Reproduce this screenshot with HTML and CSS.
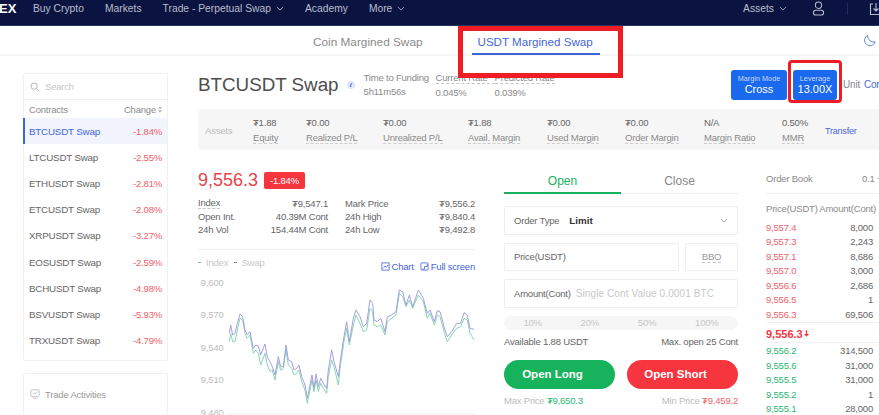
FILE: index.html
```html
<!DOCTYPE html>
<html lang="en">
<head>
  <meta charset="UTF-8">
  <title>USDT Margined Swap</title>
  <link rel="stylesheet" href="styles.css">
</head>
<body>
  <!-- Top bar -->
  <header class="topbar">
    <span class="logo">EX</span>
    <nav class="nav">
      <a>Buy Crypto</a>
      <a>Markets</a>
      <a>Trade - Perpetual Swap <svg class="chev" viewBox="0 0 10 6"><path d="M1 1l4 4 4-4"/></svg></a>
      <a>Academy</a>
      <a>More <svg class="chev" viewBox="0 0 10 6"><path d="M1 1l4 4 4-4"/></svg></a>
    </nav>
    <div class="top-right">
      <a>Assets <svg class="chev" viewBox="0 0 10 6"><path d="M1 1l4 4 4-4"/></svg></a>
      <svg class="user-icon" viewBox="0 0 14 16"><circle cx="7" cy="4.5" r="3.4"/><rect x="1.5" y="10" width="11" height="5" rx="2.5"/></svg>
      <span class="top-sep"></span>
      <svg class="dl-icon" viewBox="0 0 14 14"><path d="M4 2H1.500v10.500h11V2H10M7 1v8M4.500 6.500L7 9l2.500-2.500"/></svg>
    </div>
  </header>

  <!-- Swap type tabs -->
  <div class="subnav">
    <a class="sub-coin">Coin Margined Swap</a>
    <a class="sub-usdt">USDT Margined Swap</a>
    <svg class="moon" viewBox="0 0 14 14"><path d="M5 1.500a5.800 5.800 0 1 0 8 7A6.500 6.500 0 0 1 5 1.500z"/></svg>
  </div>

  <div class="page">
    <!-- Contract list -->
    <aside class="side">
      <div class="card">
        <div class="search">
          <svg viewBox="0 0 12 12"><circle cx="5" cy="5" r="3.800"/><path d="M8 8l3 3"/></svg>
          <span>Search</span>
        </div>
        <div class="list-head">
          <span>Contracts</span>
          <span class="sort">Change <svg viewBox="0 0 5 8"><path d="M2.500 0L5 3H0zM2.500 8L0 5h5z"/></svg></span>
        </div>
        <div class="row active"><span>BTCUSDT Swap</span><b>-1.84%</b></div>
        <div class="row"><span>LTCUSDT Swap</span><b>-2.55%</b></div>
        <div class="row"><span>ETHUSDT Swap</span><b>-2.81%</b></div>
        <div class="row"><span>ETCUSDT Swap</span><b>-2.08%</b></div>
        <div class="row"><span>XRPUSDT Swap</span><b>-3.27%</b></div>
        <div class="row"><span>EOSUSDT Swap</span><b>-2.59%</b></div>
        <div class="row"><span>BCHUSDT Swap</span><b>-4.98%</b></div>
        <div class="row"><span>BSVUSDT Swap</span><b>-5.93%</b></div>
        <div class="row"><span>TRXUSDT Swap</span><b>-4.79%</b></div>
      </div>
      <div class="card activities">
        <svg viewBox="0 0 12 12"><rect x="1" y="1" width="10" height="8" rx="1.500"/><path d="M3 6.500l2-2 1.500 1L9 3.500M3 11h6"/></svg>
        <span>Trade Activities</span>
      </div>
    </aside>

    <main class="main">
      <div class="head">
        <h1>BTCUSDT Swap</h1>
        <span class="info">i</span>
        <div class="fund fund-time"><span>Time to Funding</span><span>5h11m56s</span></div>
        <div class="fund fund-cur"><span class="dash">Current Rate</span><span>0.045%</span></div>
        <div class="fund"><span class="dash">Predicted Rate</span><span>0.039%</span></div>
        <div class="head-right">
          <button class="mode"><small>Margin Mode</small>Cross</button>
          <button class="mode lev"><small>Leverage</small>13.00X</button>
          <span class="unit">Unit</span>
          <a class="unit-link">Cont</a>
        </div>
      </div>

      <div class="assets">
        <span class="assets-title">Assets</span>
        <div><span>₮1.88</span><em>Equity</em></div>
        <div><span>₮0.00</span><em>Realized P/L</em></div>
        <div><span>₮0.00</span><em>Unrealized P/L</em></div>
        <div><span>₮1.88</span><em>Avail. Margin</em></div>
        <div><span>₮0.00</span><em>Used Margin</em></div>
        <div><span>₮0.00</span><em>Order Margin</em></div>
        <div><span>N/A</span><em>Margin Ratio</em></div>
        <div><span>0.50%</span><em>MMR</em></div>
        <a class="transfer">Transfer</a>
      </div>

      <div class="columns">
        <!-- Price and chart -->
        <section class="market">
          <div class="price-line">
            <span class="price">9,556.3</span>
            <span class="badge">-1.84%</span>
          </div>
          <div class="stats">
            <div><span class="dash">Index</span><span>₮9,547.1</span></div>
            <div><span>Mark Price</span><span>₮9,556.2</span></div>
            <div><span>Open Int.</span><span>40.39M Cont</span></div>
            <div><span>24h High</span><span>₮9,840.4</span></div>
            <div><span>24h Vol</span><span>154.44M Cont</span></div>
            <div><span>24h Low</span><span>₮9,492.8</span></div>
          </div>
          <div class="chart-bar">
            <div class="legend"><i class="g"></i>Index <i class="p"></i>Swap</div>
            <div class="chart-links">
              <a><svg viewBox="0 0 10 10"><rect x="1" y="1" width="8" height="8"/><path d="M2.500 7l2-2.500 1.500 1.500L8 3"/></svg>Chart</a>
              <a><svg viewBox="0 0 10 10"><rect x="1" y="1" width="8" height="8" rx="1"/><path d="M5 5h3V2.500M5 5v3H2"/></svg>Full screen</a>
            </div>
          </div>
          <svg class="chart" viewBox="24 0 831 435">
            <g class="axis">
              <text x="32" y="47">9,600</text>
              <text x="32" y="145">9,570</text>
              <text x="32" y="242">9,540</text>
              <text x="32" y="340">9,510</text>
              <text x="32" y="437">9,480</text>
            </g>
            <path class="base" d="M115 431H855"/>
            <polyline class="line-g" points="118,215 122,190 128,215 135,215 142,180 150,145 158,150 165,190 172,205 180,195 190,250 197,240 205,250 212,285 225,250 232,285 240,305 247,300 255,330 265,275 272,300 280,295 288,240 295,285 305,295 312,315 320,310 327,300 335,335 345,360 352,400 360,360 366,330 372,365 378,330 385,365 392,340 400,355 410,370 415,320 425,270 432,290 445,345 452,280 462,215 470,175 478,225 490,165 498,135 510,160 520,185 530,180 540,115 548,125 552,165 562,170 572,165 585,195 592,155 605,145 618,135 628,70 638,80 648,110 658,90 668,115 685,75 700,95 712,145 720,130 733,165 742,135 750,140 765,195 772,215 785,195 800,175 812,170 822,145 832,150 840,190 852,210"/>
            <polyline class="line-p" points="118,190 122,165 128,195 135,190 142,160 150,132 158,140 165,180 172,195 180,185 190,235 197,225 205,228 212,255 225,222 232,262 240,275 247,290 255,315 265,260 272,290 280,290 288,225 295,270 305,275 312,300 320,295 327,285 335,320 345,345 352,385 360,345 366,315 372,355 378,312 385,350 392,325 400,340 410,355 415,300 425,240 432,275 445,320 452,265 462,200 470,155 478,215 490,145 498,120 510,140 520,170 530,160 540,90 548,100 552,150 562,155 572,145 585,185 592,140 605,135 618,125 628,60 638,65 648,105 658,75 668,110 685,60 700,85 712,130 720,120 733,155 742,122 750,125 765,180 772,200 785,185 800,160 812,160 822,128 832,135 840,175 852,178"/>
          </svg>
        </section>

        <!-- Order form -->
        <section class="order">
          <div class="tabs"><a class="on">Open</a><a>Close</a></div>
          <div class="field field-type">
            <label>Order Type</label><strong>Limit</strong>
            <svg class="chev" viewBox="0 0 10 6"><path d="M1 1l4 4 4-4"/></svg>
          </div>
          <div class="field-row">
            <div class="field"><label>Price(USDT)</label></div>
            <div class="field bbo"><span class="dash">BBO</span></div>
          </div>
          <div class="field"><label>Amount(Cont)</label><span class="hint">Single Cont Value 0.0001 BTC</span></div>
          <div class="pct"><span>10%</span><span>20%</span><span>50%</span><span>100%</span></div>
          <div class="avail"><span>Available 1.88 USDT</span><span>Max. open 25 Cont</span></div>
          <div class="actions">
            <button class="long">Open Long</button>
            <button class="short">Open Short</button>
          </div>
          <div class="limits">
            <span>Max Price <b class="up">₮9,650.3</b></span>
            <span>Min Price <b class="down">₮9,459.2</b></span>
          </div>
        </section>

        <!-- Order book -->
        <section class="book">
          <div class="book-title">
            <span class="book-name">Order Book</span>
            <span>0.1</span>
            <svg class="chev" viewBox="0 0 10 6"><path d="M1 1l4 4 4-4"/></svg>
          </div>
          <div class="book-row book-head"><span>Price(USDT)</span><span>Amount(Cont)</span></div>
          <div class="book-row"><span class="down">9,557.4</span><span>8,000</span></div>
          <div class="book-row"><span class="down">9,557.3</span><span>2,243</span></div>
          <div class="book-row"><span class="down">9,557.1</span><span>8,686</span></div>
          <div class="book-row"><span class="down">9,557.0</span><span>3,000</span></div>
          <div class="book-row"><span class="down">9,556.6</span><span>2,686</span></div>
          <div class="book-row"><span class="down">9,556.5</span><span>1</span></div>
          <div class="book-row"><span class="down">9,556.3</span><span>69,506</span></div>
          <div class="book-mid">9,556.3<svg viewBox="0 0 6 8"><path d="M2.200 0h1.600v4.500H6L3 8 0 4.500h2.200z"/></svg></div>
          <div class="book-row"><span class="up">9,556.2</span><span>314,500</span></div>
          <div class="book-row"><span class="up">9,555.6</span><span>31,000</span></div>
          <div class="book-row"><span class="up">9,555.5</span><span>31,000</span></div>
          <div class="book-row"><span class="up">9,555.2</span><span>1</span></div>
          <div class="book-row"><span class="up">9,555.1</span><span>28,000</span></div>
        </section>
      </div>
    </main>
  </div>

  <!-- Red annotation boxes drawn over the page -->
  <div class="mark mark-tab"></div>
  <div class="mark mark-lev"></div>
</body>
</html>
```

FILE: styles.css
```css
* {
  box-sizing: border-box;
}
html, body {
  margin: 0;
  height: 415px;
  overflow: hidden;
}
body {
  position: relative;
  background: #fff;
  color: #666;
  font-family: "Liberation Sans", Arial, sans-serif;
  font-size: 9.5px;
  letter-spacing: -0.2px;
}
a {
  text-decoration: none;
}
button {
  border: none;
  font-family: inherit;
  cursor: pointer;
}
em {
  font-style: normal;
}
.chev {
  flex: none;
  width: 8px;
  height: 5px;
  fill: none;
  stroke: currentColor;
  stroke-width: 1;
}

/* top bar */
.topbar {
  display: flex;
  align-items: center;
  height: 26px;
  padding-bottom: 8px;
  background: #0b1440;
  border-bottom: 1px solid #26355f;
  color: #b9bdcc;
  font-size: 10.3px;
  letter-spacing: 0;
}
.logo {
  width: 34px;
  margin-left: -1px;
  color: #fff;
  font-size: 13px;
  font-weight: bold;
}
.nav {
  display: flex;
  gap: 21px;
}
.nav a, .top-right a {
  display: flex;
  align-items: center;
  gap: 5px;
}
.top-right {
  display: flex;
  align-items: center;
  margin-left: auto;
  margin-right: -4px;
}
.top-right a {
  margin-right: 25px;
}
.user-icon, .dl-icon {
  fill: none;
  stroke: #b9bdcc;
  stroke-width: 1.1;
}
.user-icon {
  width: 13px;
  height: 15px;
}
.top-sep {
  width: 1px;
  height: 12px;
  margin: 0 21px 0 22px;
  background: #1d2c5c;
}
.dl-icon {
  width: 14px;
  height: 14px;
}

/* swap tabs */
.subnav {
  display: flex;
  align-items: flex-start;
  height: 30px;
  border-bottom: 2px solid #f6f6f6;
  font-size: 11.8px;
  letter-spacing: 0;
}
.sub-coin {
  margin: 9px 0 0 313px;
  color: #8a8a8a;
}
.sub-usdt {
  width: 128px;
  height: 20px;
  margin: 9px 0 0 49px;
  padding-left: 6px;
  border-bottom: 2px solid #3f62d6;
  color: #4667d8;
  font-size: 11.6px;
}
.moon {
  width: 13px;
  height: 13px;
  margin: 8px 3px 0 auto;
  fill: none;
  stroke: #4667d8;
  stroke-width: 0.9;
}

.page {
  display: flex;
  gap: 30px;
  height: 359px;
  padding-left: 23px;
  overflow: hidden;
}

/* contract list */
.side {
  flex: none;
  width: 145px;
  padding-top: 17px;
}
.card {
  padding-bottom: 6px;
  border: 1px solid #f1f1f1;
  border-radius: 2px;
}
.search {
  display: flex;
  align-items: center;
  gap: 5px;
  height: 26px;
  padding-left: 6px;
  border-bottom: 1px solid #f1f1f1;
  color: #c8c8c8;
}
.search svg {
  width: 10px;
  height: 10px;
  fill: none;
  stroke: #aaa;
}
.list-head {
  display: flex;
  justify-content: space-between;
  align-items: center;
  height: 18px;
  padding: 0 5px;
  color: #8c8c8c;
}
.sort {
  display: flex;
  align-items: center;
  gap: 2px;
}
.sort svg {
  width: 4px;
  height: 7px;
  fill: #b5b5b5;
}
.row {
  display: flex;
  justify-content: space-between;
  align-items: center;
  height: 26.2px;
  padding: 0 5px;
  font-size: 9.8px;
}
.row b {
  color: #f0616b;
  font-size: 9.5px;
  font-weight: normal;
}
.row.active {
  margin-left: -1px;
  padding-left: 4px;
  border-left: 2px solid #3f62d6;
  background: #f1f4fd;
  color: #4667d8;
}
.activities {
  display: flex;
  align-items: center;
  gap: 5px;
  height: 42px;
  margin-top: 12px;
  padding: 0 0 0 6px;
  border-bottom: none;
  color: #999;
}
.activities svg {
  width: 10px;
  height: 10px;
  fill: none;
  stroke: #aaa;
  stroke-width: 0.8;
}

/* main area */
.main {
  flex: 1;
  min-width: 0;
  overflow: hidden;
}
.head {
  display: flex;
  align-items: center;
  height: 53px;
  padding-top: 4px;
}
.head h1 {
  margin: 0;
  color: #4d4d4d;
  font-size: 18.8px;
  font-weight: normal;
  letter-spacing: 0;
  white-space: nowrap;
}
.info {
  flex: none;
  width: 8px;
  height: 8px;
  margin-left: 8px;
  border-radius: 50%;
  background: #dfe6fb;
  color: #3f62d6;
  font: italic bold 7px/8px "Liberation Serif", serif;
  text-align: center;
}
.fund {
  display: flex;
  flex-direction: column;
  flex: none;
  gap: 3px;
  color: #8a8a8a;
  white-space: nowrap;
}
.fund-time {
  width: 72px;
  margin-left: 9px;
}
.fund-cur {
  width: 59px;
}
.dash {
  border-bottom: 1px dashed #c4c4c4;
}
.head-right {
  display: flex;
  flex: none;
  align-items: center;
  margin-left: auto;
  width: 148px;
  white-space: nowrap;
}
.mode {
  display: flex;
  flex: none;
  flex-direction: column;
  align-items: center;
  width: 56px;
  height: 30px;
  padding: 4px 0 0;
  border-radius: 3px;
  background: #1a69ee;
  color: #fff;
  font-size: 11px;
  letter-spacing: 0;
  line-height: 13px;
}
.mode small {
  color: #c6d9fb;
  font-size: 7.3px;
  line-height: 9px;
}
.lev {
  width: 44px;
  margin-left: 6px;
}
.unit {
  margin-left: 6px;
  color: #8a8a8a;
  font-size: 10px;
}
.unit-link {
  margin-left: 4px;
  color: #4667d8;
  font-size: 10px;
}

/* assets bar */
.assets {
  display: grid;
  grid-template-columns: 48px 53px 77px 85px 79px 78px 79px 78px 43px auto;
  align-items: center;
  height: 41px;
  padding: 2px 0 0 7px;
  background: #f6f6f6;
  border-radius: 4px 0 0 4px;
  white-space: nowrap;
}
.assets div {
  display: flex;
  flex-direction: column;
  align-items: flex-start;
  gap: 4px;
}
.assets em {
  border-bottom: 1px dashed #ccc;
  color: #8a8a8a;
}
.assets-title {
  color: #bbb;
}
.transfer {
  color: #4667d8;
  font-size: 9px;
}

.columns {
  display: flex;
  align-items: flex-start;
}

/* price + chart */
.market {
  flex: none;
  width: 277px;
  margin-right: 29px;
  padding-top: 20px;
}
.price-line {
  display: flex;
  align-items: center;
  height: 21px;
}
.price {
  width: 66px;
  color: #e8434c;
  font-size: 18px;
  letter-spacing: 0;
}
.badge {
  width: 41px;
  height: 17px;
  border-radius: 2px;
  background: #f6353f;
  color: #fff;
  line-height: 17px;
  text-align: center;
}
.stats {
  display: grid;
  grid-template-columns: 130px 130px;
  column-gap: 17px;
  margin-top: 6px;
  padding-bottom: 13px;
  border-bottom: 1px solid #f1f1f1;
}
.stats div {
  display: flex;
  justify-content: space-between;
  align-items: flex-start;
  height: 13px;
  line-height: 13px;
}
.stats .dash {
  line-height: 11px;
}
.chart-bar {
  display: flex;
  justify-content: space-between;
  align-items: flex-start;
  height: 20px;
  padding-top: 7px;
}
.legend {
  color: #c8c8c8;
}
.legend i {
  display: inline-block;
  width: 3px;
  height: 1px;
  margin: 0 5px 3px 0;
  background: #5fc58d;
}
.legend i.p {
  margin-left: 3px;
  background: #7c7ce0;
}
.chart-links {
  display: flex;
  gap: 6px;
  padding-top: 4px;
}
.chart-links a {
  display: flex;
  align-items: center;
  gap: 2px;
  color: #4667d8;
}
.chart-links svg {
  width: 9px;
  height: 9px;
  fill: none;
  stroke: #4667d8;
  stroke-width: 0.9;
}
.chart {
  display: block;
  width: 277px;
  height: 145px;
}
.axis text {
  fill: #bbb;
  font-family: "Liberation Sans", Arial, sans-serif;
  font-size: 28px;
}
.base {
  fill: none;
  stroke: #f1f1f1;
  stroke-width: 3;
}
.line-g, .line-p {
  fill: none;
  stroke-width: 2.8;
  stroke-linejoin: round;
}
.line-g {
  stroke: #7fd3ac;
}
.line-p {
  stroke: #9d98de;
}

/* order form */
.order {
  flex: none;
  width: 234px;
  margin-right: 28px;
  padding-top: 10px;
}
.tabs {
  display: flex;
  height: 34px;
  margin-bottom: 12px;
  border-bottom: 1px solid #eee;
  color: #888;
  font-size: 12px;
  letter-spacing: 0;
}
.tabs a {
  flex: 1;
  padding-top: 14px;
  text-align: center;
}
.tabs a.on {
  height: 34px;
  border-bottom: 2px solid #17b25c;
  color: #17b25c;
}
.field {
  display: flex;
  align-items: center;
  height: 28.5px;
  margin-bottom: 8px;
  padding: 0 9px;
  border: 1px solid #eee;
  border-radius: 2px;
  white-space: nowrap;
}
.field strong {
  margin-left: 10px;
  color: #333;
  font-size: 9.8px;
  letter-spacing: 0;
}
.field-type .chev {
  margin-left: auto;
  color: #888;
}
.field-row {
  display: flex;
  gap: 6px;
}
.field-row .field:first-child {
  flex: 1;
}
.bbo {
  justify-content: center;
  width: 53px;
  color: #999;
}
.hint {
  margin-left: 5px;
  color: #c8c8c8;
  font-size: 10px;
  letter-spacing: 0.1px;
}
.pct {
  display: flex;
  justify-content: space-around;
  height: 14px;
  border-radius: 7px;
  background: #f6f6f6;
  color: #c8c8c8;
  line-height: 14px;
}
.avail, .limits {
  display: flex;
  justify-content: space-between;
}
.avail {
  margin-top: 5px;
  line-height: 13px;
}
.actions {
  display: flex;
  justify-content: space-between;
  margin-top: 12px;
}
.actions button {
  width: 111px;
  height: 29px;
  padding: 0 14px 0 0;
  border-radius: 15px;
  color: #fff;
  font-size: 11.5px;
  font-weight: bold;
  letter-spacing: 0;
}
.long {
  background: #17b25c;
}
.short {
  background: #f6353f;
}
.limits {
  margin-top: 6px;
  color: #bbb;
}
.limits b {
  font-weight: normal;
}
.up {
  color: #2bb673;
}
.down {
  color: #f0616b;
}

/* order book */
.book {
  flex: none;
  width: 107px;
  padding-top: 23px;
}
.book-title {
  display: flex;
  height: 21px;
  margin-right: -6px;
  border-bottom: 1px solid #f1f1f1;
  color: #8a8a8a;
  white-space: nowrap;
}
.book-name {
  flex: none;
  width: 96px;
}
.book-title .chev {
  margin: 4px 0 0 2px;
}
.book-row {
  display: flex;
  justify-content: space-between;
  height: 14.5px;
  line-height: 14.5px;
  white-space: nowrap;
}
.book-head {
  margin: 8px -3px 4px 0;
  color: #8a8a8a;
}
.book-mid {
  display: flex;
  align-items: center;
  gap: 1px;
  height: 21px;
  margin: 0 -6px 1px 0;
  padding-top: 2px;
  border-top: 1px solid #f1f1f1;
  border-bottom: 1px solid #f1f1f1;
  color: #f6353f;
  font-size: 11px;
  font-weight: bold;
  letter-spacing: 0;
}
.book-mid svg {
  width: 5px;
  height: 7px;
  fill: #f6353f;
}

/* red annotation boxes */
.mark {
  position: absolute;
  border: 5px solid #ee1c25;
}
.mark-tab {
  left: 458px;
  top: 26px;
  width: 165px;
  height: 52px;
}
.mark-lev {
  left: 788px;
  top: 60px;
  width: 54px;
  height: 43px;
  border-width: 3px;
  border-radius: 4px;
}
```
